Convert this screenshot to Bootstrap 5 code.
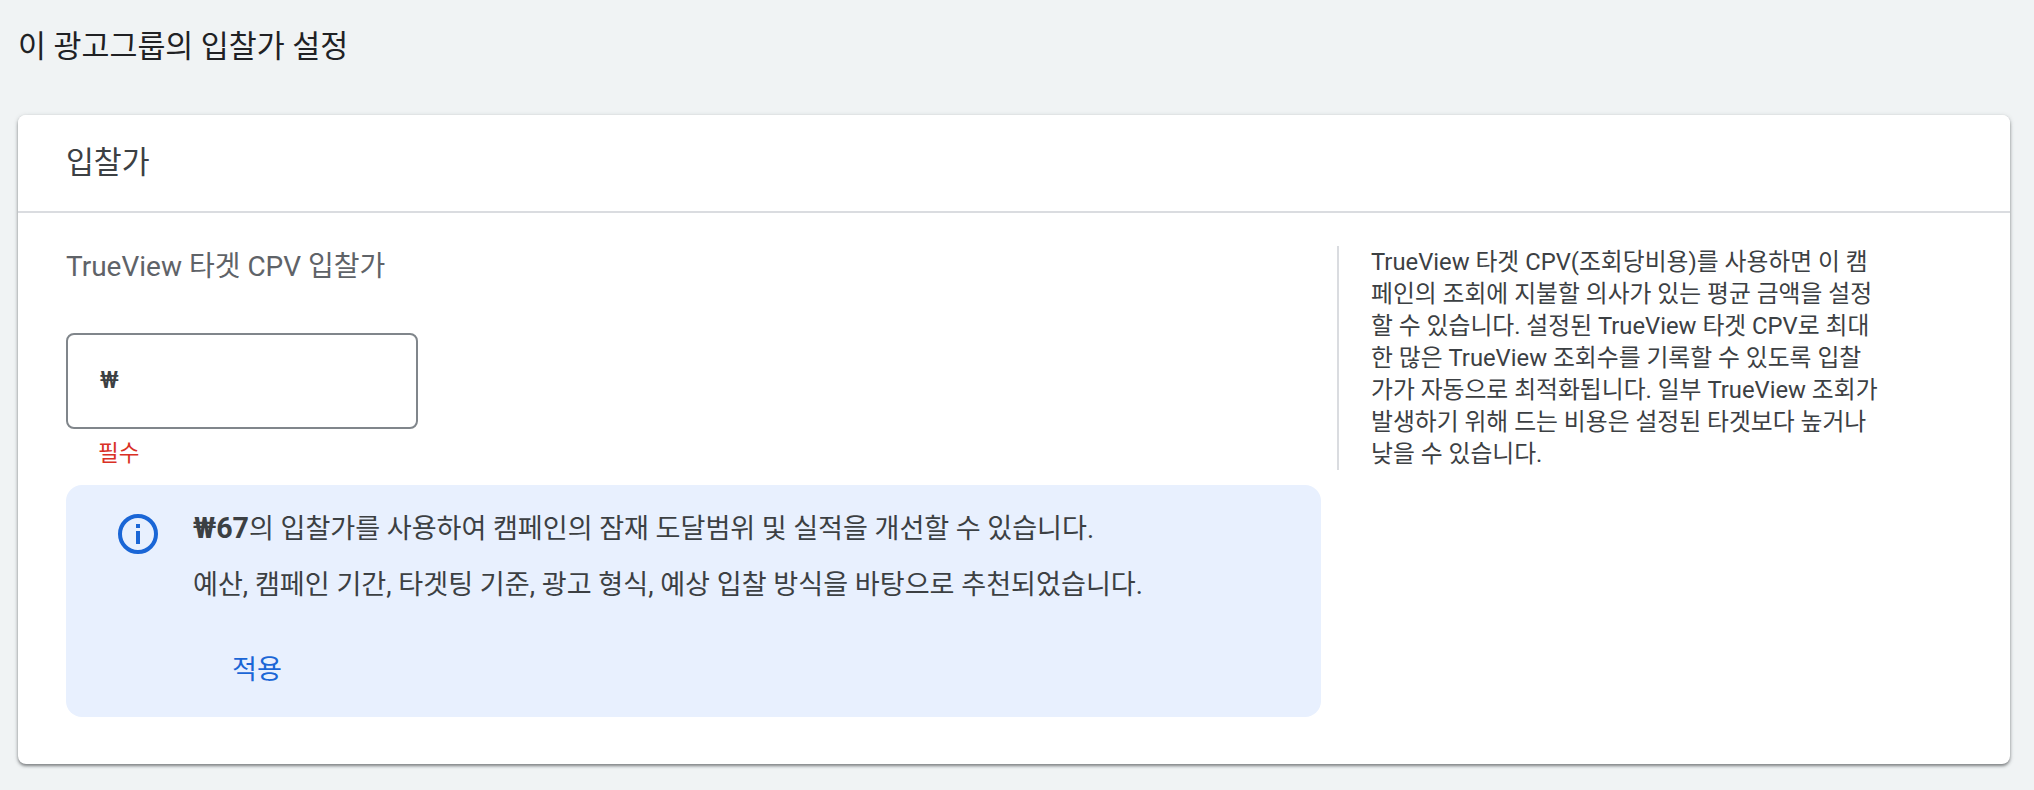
<!DOCTYPE html>
<html lang="ko">
<head>
<meta charset="utf-8">
<title>입찰가</title>
<link href="https://cdn.jsdelivr.net/npm/bootstrap@5.3.0/dist/css/bootstrap.min.css" rel="stylesheet">
<style>
html,body{height:100%}
body{background:#f0f3f4;font-family:Roboto,"Noto Sans CJK KR",sans-serif;color:#3c4043;overflow:hidden}
.page-title{font-size:30.4px;line-height:40px;font-weight:400;color:#202124;margin:0;padding:27px 18px 48px}
.bid-card{margin:0 24px 0 18px;background:#fff;border:0;border-radius:8px;box-shadow:0 2px 3px rgba(60,64,67,.55),0 1px 5px rgba(60,64,67,.2)}
.bid-head{height:98px;padding:0 48px;font-size:30.3px;display:flex;align-items:center;border-bottom:2px solid #dadce0;background:#fff;border-radius:8px 8px 0 0}
.bid-body{padding:33px 48px 47px;display:flex}
.bid-main{width:1255px;flex:none}
.bid-label{font-size:28px;line-height:40px;color:#5f6368;padding-top:1px;margin-bottom:46px}
.bid-input{width:352px;height:96px;border:2px solid #80868b;border-radius:8px;padding:0 32px 2px;font-size:24px;display:flex;align-items:center;font-weight:500}
.bid-err{font-size:22.5px;line-height:32px;color:#d93025;padding:8px 32px 0;margin-bottom:16px;height:40px}
.reco{background:#e8f0fe;border-radius:16px;height:232px;padding:27px 0 0 51px;display:flex}
.reco svg{width:42px;height:42px;margin-right:34px;margin-top:1px;flex:none}
.reco p{font-size:27.1px;line-height:36px;margin:0 0 19px;height:36px}
.reco b{font-size:28.6px;line-height:1}
.reco .lead-line{word-spacing:-.2px;margin-top:-1px;margin-bottom:20px}
.reco a{display:block;margin:49px 0 0 39px;font-size:27.1px;line-height:36px;color:#1a66d6;text-decoration:none}
.bid-side{margin-left:16px;padding-left:32px;border-left:2px solid #dadce0;width:548px;height:224px;font-size:23.8px;line-height:32px;flex:none}
</style>
</head>
<body>
<h1 class="page-title">이 광고그룹의 입찰가 설정</h1>
<div class="card bid-card">
  <div class="bid-head">입찰가</div>
  <div class="bid-body">
    <div class="bid-main">
      <div class="bid-label">TrueView 타겟 CPV 입찰가</div>
      <div class="bid-input">₩</div>
      <div class="bid-err">필수</div>
      <div class="reco">
        <svg viewBox="0 0 42 42" fill="none"><circle cx="21" cy="21" r="18" stroke="#1a66d6" stroke-width="4"/><rect x="19" y="11" width="4" height="4" fill="#1a66d6"/><rect x="19" y="18" width="4" height="13" fill="#1a66d6"/></svg>
        <div>
          <p class="lead-line"><b>₩67</b>의 입찰가를 사용하여 캠페인의 잠재 도달범위 및 실적을 개선할 수 있습니다.</p>
          <p>예산, 캠페인 기간, 타겟팅 기준, 광고 형식, 예상 입찰 방식을 바탕으로 추천되었습니다.</p>
          <a href="#">적용</a>
        </div>
      </div>
    </div>
    <div class="bid-side">TrueView 타겟 CPV(조회당비용)를 사용하면 이 캠<br>페인의 조회에 지불할 의사가 있는 평균 금액을 설정<br>할 수 있습니다. 설정된 TrueView 타겟 CPV로 최대<br>한 많은 TrueView 조회수를 기록할 수 있도록 입찰<br>가가 자동으로 최적화됩니다. 일부 TrueView 조회가<br>발생하기 위해 드는 비용은 설정된 타겟보다 높거나<br>낮을 수 있습니다.</div>
  </div>
</div>
<script src="https://cdn.jsdelivr.net/npm/bootstrap@5.3.0/dist/js/bootstrap.bundle.min.js"></script>
</body>
</html>
